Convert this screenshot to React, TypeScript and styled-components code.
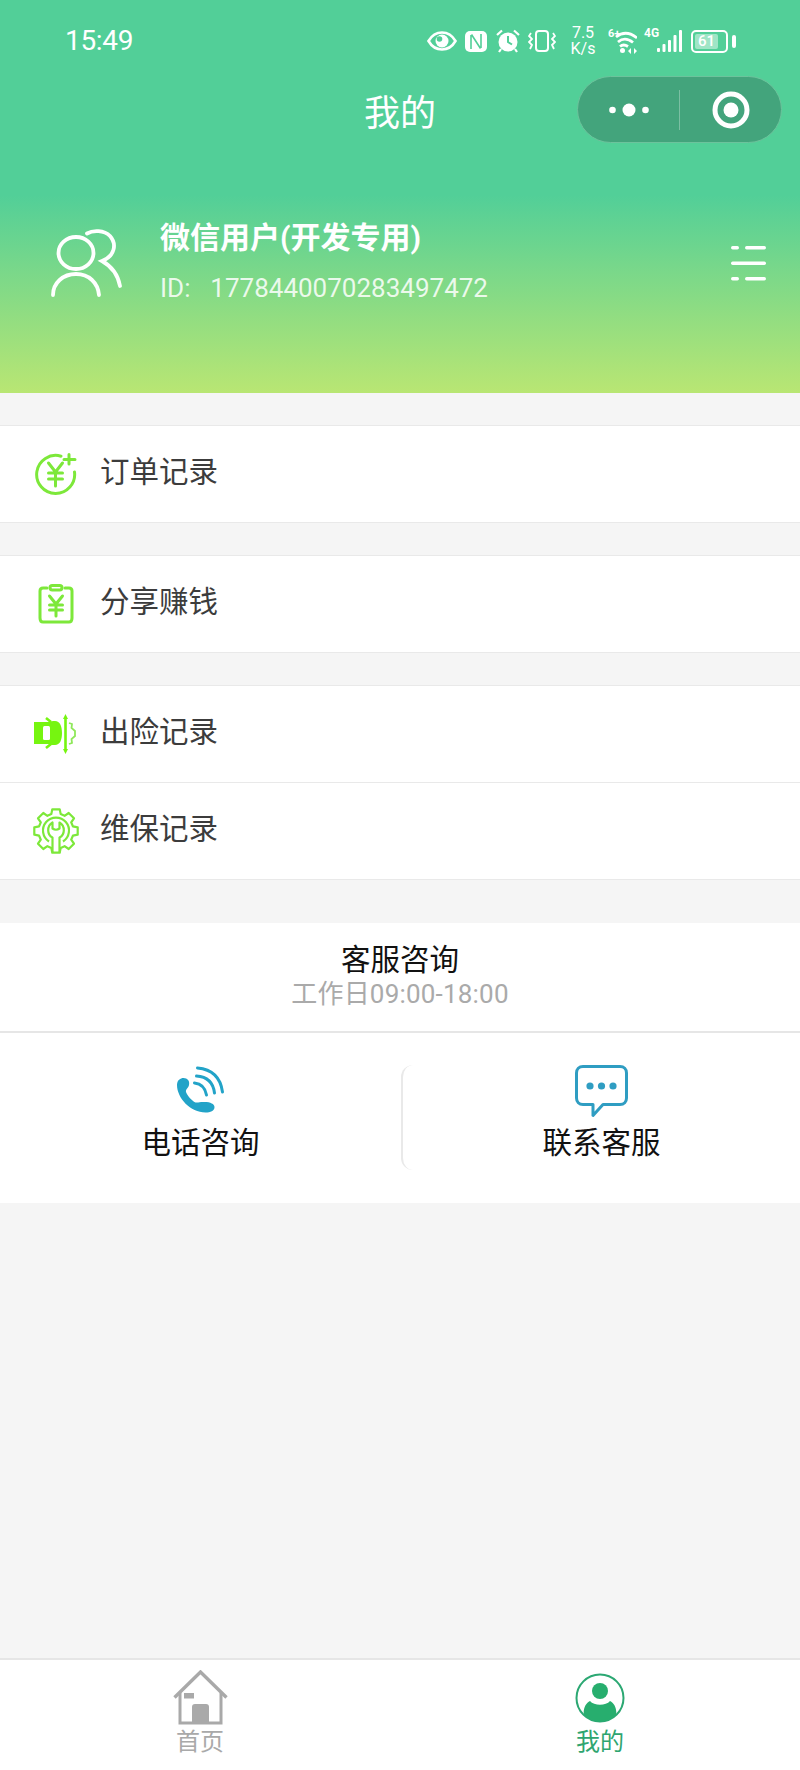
import React from "react";
import styled, { createGlobalStyle } from "styled-components";

const GlobalStyle = createGlobalStyle`
  html, body {
    margin: 0;
    padding: 0;
    background: #f5f5f5;
    font-family: Roboto, "Noto Sans CJK SC", sans-serif;
  }
`;

const Page = styled.div`
  width: 800px;
  min-height: 1770px;
  display: flex;
  flex-direction: column;
  background: #f5f5f5;
`;
const Header = styled.header`
  height: 393px;
  flex: none;
  color: #fff;
  background: linear-gradient(180deg, #52cf98 0, #52cf98 195px, #b9e673 393px);
`;
const StatusBar = styled.div`
  height: 76px;
  padding: 4px 64px 0 65px;
  box-sizing: border-box;
  display: flex;
  align-items: center;
  justify-content: space-between;
`;
const Time = styled.span`
  font-size: 28px;
  font-weight: 400;
  letter-spacing: -0.3px;
`;
const StatusIcons = styled.div`
  display: flex;
  align-items: center;
  margin-top: 2px;
`;
const StatusIcon = styled.svg<{ $gap: number }>`
  display: block;
  flex: none;
  margin-right: ${(props) => props.$gap}px;
`;
const Speed = styled.span`
  width: 26px;
  margin-right: 12px;
  font-size: 16px;
  line-height: 16px;
  text-align: center;
`;
const NetLabel = styled.span`
  width: 13px;
  align-self: flex-start;
  margin-top: 1px;
  font-size: 12px;
  font-weight: 700;
  line-height: 14px;
`;
const Battery = styled.div`
  width: 37px;
  height: 23px;
  box-sizing: border-box;
  padding: 2px;
  border: 2px solid #fff;
  border-radius: 5px;
  margin-right: 4px;
  display: flex;
`;
const BatteryLevel = styled.span`
  width: 23px;
  border-radius: 2px;
  background: rgba(255, 255, 255, 0.45);
  font-size: 15px;
  font-weight: 500;
  line-height: 15px;
  text-align: center;
`;
const BatteryTip = styled.span`
  width: 4px;
  height: 13px;
  border-radius: 2px;
  background: #fff;
`;
const NavBar = styled.div`
  height: 67px;
  padding: 0 18px;
  display: grid;
  grid-template-columns: 1fr auto 1fr;
  align-items: center;
`;
const NavTitle = styled.h1`
  grid-column: 2;
  margin: 0;
  font-size: 36px;
  font-weight: 400;
`;
const Capsule = styled.div`
  grid-column: 3;
  justify-self: end;
  width: 205px;
  height: 67px;
  box-sizing: border-box;
  border: 1px solid #6cc39c;
  border-radius: 34px;
  background: #43a47c;
  display: grid;
  grid-template-columns: 1fr 1px 1fr;
  align-items: center;
  justify-items: center;
`;
const CapsuleLine = styled.span`
  width: 1px;
  height: 40px;
  background: rgba(255, 255, 255, 0.3);
`;
const Profile = styled.div`
  margin-top: 75px;
  height: 90px;
  padding: 0 34px 0 51px;
  display: flex;
  align-items: center;
`;
const ProfileText = styled.div`
  flex: 1;
  margin-left: 38px;
  display: flex;
  flex-direction: column;
  gap: 10px;
`;
const UserName = styled.div`
  font-size: 30px;
  font-weight: 700;
  line-height: 40px;
`;
const UserId = styled.div`
  font-size: 26px;
  line-height: 40px;
  white-space: pre;
  word-spacing: 3.5px;
  color: rgba(255, 255, 255, 0.85);
`;
const Main = styled.main`
  flex: 1;
`;
const Group = styled.section`
  margin-top: 32px;
  background: #fff;
  border-top: 1px solid #e9e9e9;
`;
const Row = styled.div`
  height: 96px;
  padding-left: 33px;
  border-bottom: 1px solid #e9e9e9;
  display: flex;
  align-items: center;
`;
const RowIcon = styled.span`
  width: 46px;
  margin-right: 21px;
  display: flex;
  justify-content: center;
`;
const RowText = styled.span`
  margin-bottom: 11px;
  font-size: 29.5px;
  color: #3c3c3c;
`;
const Service = styled.section`
  margin-top: 43px;
  background: #fff;
`;
const ServiceHead = styled.div`
  height: 91px;
  padding-top: 17px;
  border-bottom: 2px solid #e6e6e6;
  text-align: center;
`;
const ServiceTitle = styled.div`
  font-size: 29.5px;
  line-height: 40px;
  color: #111;
`;
const ServiceHours = styled.div`
  font-size: 26px;
  line-height: 28px;
  letter-spacing: 0.2px;
  color: #aaa;
`;
const Contacts = styled.div`
  height: 170px;
  padding-top: 32px;
  box-sizing: border-box;
  display: grid;
  grid-template-columns: 401px 1fr;
`;
const Contact = styled.div<{ $divided?: boolean }>`
  height: 105px;
  box-sizing: border-box;
  border-left: ${(props) => (props.$divided ? "2px solid #e9e9e9" : "none")};
  border-radius: 12px 0 0 12px;
  display: flex;
  flex-direction: column;
  align-items: center;
`;
const ContactIcon = styled.span`
  height: 54px;
  display: flex;
  align-items: flex-start;
`;
const ContactText = styled.span`
  margin-top: 4px;
  font-size: 29.5px;
  line-height: 40px;
  color: #111;
`;
const TabBar = styled.nav`
  height: 112px;
  flex: none;
  box-sizing: border-box;
  background: #fff;
  border-top: 2px solid #e6e6e6;
  display: grid;
  grid-template-columns: 400px 1fr;
`;
const Tab = styled.div<{ $active?: boolean }>`
  padding-top: 9px;
  display: flex;
  flex-direction: column;
  align-items: center;
  color: ${(props) => (props.$active ? "#2ea56f" : "#a9a9a9")};
`;
const TabIcon = styled.span`
  height: 57px;
  display: flex;
  align-items: center;
`;
const TabText = styled.span`
  font-size: 24px;
  line-height: 32px;
`;

// 8 tooth gear outline, drawn from the tip/root radii
const gearPath = (cx: number, cy: number, outer: number, inner: number) => {
  const points: string[] = [];
  for (let i = 0; i < 8; i++) {
    const mid = (i * Math.PI) / 4 - Math.PI / 2;
    const list: [number, number][] = [
      [inner, mid - 0.27],
      [outer, mid - 0.17],
      [outer, mid + 0.17],
      [inner, mid + 0.27],
    ];
    list.forEach(([r, a]) => {
      points.push(`${(cx + r * Math.cos(a)).toFixed(1)} ${(cy + r * Math.sin(a)).toFixed(1)}`);
    });
  }
  return `M${points.join("L")}Z`;
};

const Eye = () => (
  <StatusIcon $gap={8} width="30" height="20" viewBox="0 0 30 20" fill="none">
    <path d="M1.5 10C5 4 9.500 1.500 15 1.500S25 4 28.500 10C25 16 20.500 18.500 15 18.500S5 16 1.500 10Z" stroke="#fff" strokeWidth="2.6" />
    <circle cx="15" cy="10" r="6.500" fill="#fff" />
    <circle cx="12.500" cy="8" r="2.800" fill="#52cf98" />
  </StatusIcon>
);
const Nfc = () => (
  <StatusIcon $gap={9} width="22" height="21" viewBox="0 0 22 21" fill="none">
    <rect width="22" height="21" rx="5" fill="#fff" />
    <path d="M6 18V4M16 17V3M6.500 3.500L15.500 17.500" stroke="#52cf98" strokeWidth="1.600" />
  </StatusIcon>
);
const Alarm = () => (
  <StatusIcon $gap={8} width="24" height="24" viewBox="0 0 24 24" fill="none">
    <circle cx="12" cy="13" r="9.500" fill="#fff" />
    <path d="M12 7V13L16 15.500" stroke="#52cf98" strokeWidth="2" />
    <path d="M1 6L6 1.500M23 6L18 1.500M5 20L3 23M19 20L21 23" stroke="#fff" strokeWidth="2.200" />
  </StatusIcon>
);
const Vibrate = () => (
  <StatusIcon $gap={14} width="28" height="22" viewBox="0 0 28 22" fill="none">
    <rect x="8" y="1" width="12" height="20" rx="3" stroke="#fff" strokeWidth="2" />
    <path d="M3 3L1 6L4 9L1 12L4 15L2 19M25 3L27 6L24 9L27 12L24 15L26 19" stroke="#fff" strokeWidth="1.800" />
  </StatusIcon>
);
const Wifi = () => (
  <StatusIcon $gap={7} width="29" height="28" viewBox="0 0 29 28" fill="none">
    <path d="M8 10Q18 2 29 11M10 15Q17 9 25 15.500M12 19.500Q15.500 16.500 20 19.500" stroke="#fff" strokeWidth="2.800" />
    <circle cx="14.500" cy="23.500" r="2.500" fill="#fff" />
    <text x="0" y="10" fontSize="11" fontWeight="700" fill="#fff">6+</text>
    <path d="M20 24L23 21V27ZM29 24L26 21V27Z" fill="#fff" />
  </StatusIcon>
);
const Signal = () => (
  <StatusIcon $gap={9} width="25" height="24" viewBox="0 0 25 24" fill="#fff">
    <rect x="0" y="19" width="3" height="4" rx="1" />
    <rect x="5.500" y="15" width="3" height="8" rx="1" />
    <rect x="11" y="11" width="3" height="12" rx="1" />
    <rect x="16.500" y="6" width="3" height="17" rx="1" />
    <rect x="22" y="1" width="3" height="22" rx="1" />
  </StatusIcon>
);
const Dots = () => (
  <svg width="40" height="14" viewBox="0 0 40 14" fill="#fff">
    <circle cx="3.500" cy="7" r="3.300" />
    <circle cx="20" cy="7" r="6.500" />
    <circle cx="36.500" cy="7" r="3.300" />
  </svg>
);
const Target = () => (
  <svg width="38" height="38" viewBox="0 0 38 38" fill="none">
    <circle cx="19" cy="19" r="16" stroke="#fff" strokeWidth="5" />
    <circle cx="19" cy="19" r="7.500" fill="#fff" />
  </svg>
);
const Users = () => (
  <svg width="71" height="69" viewBox="0 0 71 69" fill="none" stroke="#fff" strokeWidth="3.800" strokeLinecap="round" style={{ flex: "none" }}>
    <ellipse cx="25" cy="24" rx="17.500" ry="16" />
    <path d="M2 66C2 54 12 45 25 45S47 54 48 66" />
    <path d="M36 4.500C42 1 53 1 59 7C66 15 64 27 51 32C60 37 67 46 69 57" />
  </svg>
);
const MenuLines = () => (
  <svg width="35" height="35" viewBox="0 0 35 35" fill="#fff" style={{ flex: "none" }}>
    <rect x="0" y="0" width="8" height="3.500" rx="1.700" />
    <rect x="14" y="0" width="21" height="3.500" rx="1.700" />
    <rect x="0" y="15.500" width="35" height="3.500" rx="1.700" />
    <rect x="0" y="31" width="8" height="3.500" rx="1.700" />
    <rect x="14" y="31" width="21" height="3.500" rx="1.700" />
  </svg>
);
const YenPlus = () => (
  <svg width="42" height="42" viewBox="0 0 42 42" fill="none" stroke="#7de83a" strokeWidth="3" strokeLinecap="round">
    <path d="M26 3.200A19 19 0 1 0 39.500 19" />
    <path d="M34 1.500V11M29 6.500H40" />
    <path d="M13.500 10L20.500 19L27.500 10M20.500 19V33M13.500 20H27.500M13.500 26H27.500" />
  </svg>
);
const YenClipboard = () => (
  <svg width="36" height="40" viewBox="0 0 36 40" fill="none" stroke="#7de83a" strokeWidth="3" strokeLinecap="round">
    <path d="M9 4H5C3 4 2 5 2 7V34C2 37 3 38 5 38H31C33 38 34 37 34 34V7C34 5 33 4 31 4H27" />
    <rect x="12" y="1.500" width="12" height="4.500" rx="2.200" />
    <path d="M11.500 12L18 20L24.500 12M18 20V32M11.500 21H24.500M11.500 26H24.500" />
  </svg>
);
const CarShield = () => (
  <svg width="44" height="42" viewBox="0 0 44 42" fill="none">
    <path d="M0 9H14C16 8 19 8 21 8C26 8 28 13 28 20C28 27 26 32 21 32C19 32 16 32 14 31H0Z" fill="#76f510" />
    <path d="M12 5L17 9M12 35L17 31" stroke="#76f510" strokeWidth="2.600" />
    <rect x="9" y="13" width="7" height="14" rx="1.500" fill="#fff" />
    <path d="M31.500 4V38" stroke="#76f510" strokeWidth="2.600" />
    <path d="M31.500 1L29 6H34ZM31.500 41L29 36H34Z" fill="#76f510" />
    <path d="M35 10L38 11L37.500 15L41 18V23L37.500 26L38 30L35 31" stroke="#8fe85a" strokeWidth="1.800" />
  </svg>
);
const GearWrench = () => (
  <svg width="46" height="46" viewBox="0 0 46 46" fill="none" stroke="#7de83a" strokeWidth="2.200" strokeLinejoin="round">
    <path d={gearPath(23, 23, 22, 17.500)} />
    <path d="M16 33.500A13 13 0 1 1 30 33.500" />
    <path d="M19.500 44.500V29.500C14 27 13.500 18 19.500 14.500V20.500Q23 23 26.500 20.500V14.500C32.500 18 32 27 26.500 29.500V44.500" />
  </svg>
);
const PhoneWaves = () => (
  <svg width="50" height="50" viewBox="1.500 0 50 50" fill="none">
    <path d="M2.500 20C2.500 15 6 13 9 13C13 13 15.500 16 14.500 20C14 23 11 24 11.500 27C13 31 17 35.500 21 37.500C24 38 26 36.500 30 37C36 37 40 39 40 42C40 46 36 47.500 31 47.500C16 47.500 2.500 33 2.500 20Z" fill="#22a3c8" />
    <path d="M20 18Q30 19 32 30M22 11Q38 12 40 28M23 3Q45 5 48 27" stroke="#22a3c8" strokeWidth="3" strokeLinecap="round" />
  </svg>
);
const ChatBubble = () => (
  <svg width="53" height="53" viewBox="0 0 53 53" fill="none">
    <path d="M8 1.500H45C49 1.500 51.500 4 51.500 8V33C51.500 37 49 39.500 45 39.500H28L18 50.500V39.500H8C4 39.500 1.500 37 1.500 33V8C1.500 4 4 1.500 8 1.500Z" stroke="#2f9dc2" strokeWidth="3" strokeLinejoin="round" />
    <circle cx="15" cy="21" r="3.600" fill="#2f9dc2" />
    <circle cx="26.500" cy="21" r="3.600" fill="#2f9dc2" />
    <circle cx="38" cy="21" r="3.600" fill="#2f9dc2" />
  </svg>
);
const House = () => (
  <svg width="55" height="55" viewBox="0 0 55 55" fill="none">
    <path d="M1.500 27.500L27.500 2L53.500 27.500" stroke="#a9a9a9" strokeWidth="3.400" />
    <path d="M7 23V53H48V23" stroke="#a9a9a9" strokeWidth="3" />
    <rect x="11" y="23" width="10" height="5.500" fill="#a9a9a9" />
    <path d="M19 37C19 35 20 34 22 34H33C35 34 36 35 36 37V53H19Z" fill="#a9a9a9" />
  </svg>
);
const Person = () => (
  <svg width="50" height="50" viewBox="0 0 50 50" fill="none">
    <circle cx="25" cy="25" r="23.500" stroke="#2ca873" strokeWidth="2" />
    <circle cx="25" cy="18" r="8" fill="#27ae6e" />
    <path d="M15 28C19 33 31 33 35 28C39 30 42 35 41.200 42A23.500 23.500 0 0 1 8.800 42C8 35 11 30 15 28Z" fill="#27ae6e" />
  </svg>
);

const App = () => {
  return (
    <Page>
      <GlobalStyle />
      <Header>
        <StatusBar>
          <Time>15:49</Time>
          <StatusIcons>
            <Eye />
            <Nfc />
            <Alarm />
            <Vibrate />
            <Speed>
              7.5
              <br />
              K/s
            </Speed>
            <Wifi />
            <NetLabel>4G</NetLabel>
            <Signal />
            <Battery>
              <BatteryLevel>61</BatteryLevel>
            </Battery>
            <BatteryTip />
          </StatusIcons>
        </StatusBar>
        <NavBar>
          <NavTitle>我的</NavTitle>
          <Capsule>
            <Dots />
            <CapsuleLine />
            <Target />
          </Capsule>
        </NavBar>
        <Profile>
          <Users />
          <ProfileText>
            <UserName>微信用户(开发专用)</UserName>
            <UserId>ID:  1778440070283497472</UserId>
          </ProfileText>
          <MenuLines />
        </Profile>
      </Header>
      <Main>
        <Group>
          <Row>
            <RowIcon><YenPlus /></RowIcon>
            <RowText>订单记录</RowText>
          </Row>
        </Group>
        <Group>
          <Row>
            <RowIcon><YenClipboard /></RowIcon>
            <RowText>分享赚钱</RowText>
          </Row>
        </Group>
        <Group>
          <Row>
            <RowIcon><CarShield /></RowIcon>
            <RowText>出险记录</RowText>
          </Row>
          <Row>
            <RowIcon><GearWrench /></RowIcon>
            <RowText>维保记录</RowText>
          </Row>
        </Group>
        <Service>
          <ServiceHead>
            <ServiceTitle>客服咨询</ServiceTitle>
            <ServiceHours>工作日09:00-18:00</ServiceHours>
          </ServiceHead>
          <Contacts>
            <Contact>
              <ContactIcon><PhoneWaves /></ContactIcon>
              <ContactText>电话咨询</ContactText>
            </Contact>
            <Contact $divided>
              <ContactIcon><ChatBubble /></ContactIcon>
              <ContactText>联系客服</ContactText>
            </Contact>
          </Contacts>
        </Service>
      </Main>
      <TabBar>
        <Tab>
          <TabIcon><House /></TabIcon>
          <TabText>首页</TabText>
        </Tab>
        <Tab $active>
          <TabIcon><Person /></TabIcon>
          <TabText>我的</TabText>
        </Tab>
      </TabBar>
    </Page>
  );
};

export default App;
